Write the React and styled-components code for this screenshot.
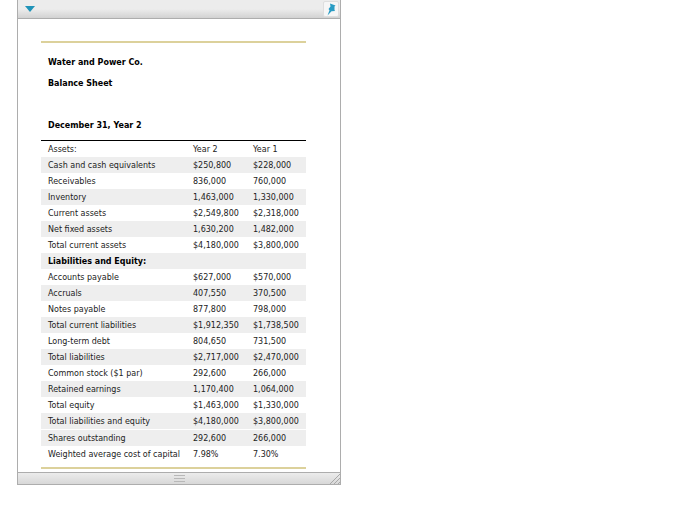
import React from "react";
import styled, { createGlobalStyle } from "styled-components";

const Global = createGlobalStyle`
  html, body { margin: 0; padding: 0; background: #fff; }
  body { font-family: "DejaVu Sans", Verdana, sans-serif; color: #000; }
`;
const Panel = styled.div`
  width: 324px;
  margin-left: 17px;
  box-sizing: border-box;
  border: 1px solid #adadad;
  border-top: 0;
  display: flex;
  flex-direction: column;
`;
const TopBar = styled.div`
  height: 18px;
  border-bottom: 1px solid #adadad;
  background: linear-gradient(#ececec 0%, #ececec 50%, #d2d2d2 100%);
  display: flex;
  align-items: center;
  justify-content: space-between;
  padding: 0 1px 0 7px;
`;
const PinButton = styled.div`
  width: 16px;
  height: 16px;
  background: #f6f6f6;
  border: 1px solid #dedede;
  box-sizing: border-box;
  border-radius: 2px;
  display: flex;
  align-items: center;
  justify-content: center;
`;
const Content = styled.div`
  padding: 22px 34px 3px 23px;
  box-sizing: border-box;
`;
const GoldRule = styled.div`
  height: 2px;
  background: #dcd19b;
`;
const Heading = styled.div`
  font-size: 8px;
  font-weight: 700;
  line-height: 11px;
  padding-left: 7px;
  margin-top: ${(p) => p.$top}px;
`;
const Table = styled.div`
  margin-top: 9px;
  border-top: 1px solid #000;
  margin-bottom: 5px;
`;
const Row = styled.div`
  display: grid;
  grid-template-columns: 145px 60px 60px;
  box-sizing: border-box;
  height: ${(p) => (p.$spaced ? 17 : 16)}px;
  border-top: ${(p) => (p.$spaced ? "1px solid #fff" : "0")};
  align-items: center;
  background: ${(p) => (p.$shade ? "#eeeeee" : "transparent")};
  background-clip: padding-box;
  font-size: 8px;
  color: #222;
`;
const Cell = styled.div`
  padding-left: 7px;
  white-space: nowrap;
  font-weight: ${(p) => (p.$bold ? 700 : 400)};
  color: ${(p) => (p.$bold ? "#000" : "inherit")};
`;
const BottomBar = styled.div`
  height: 11px;
  border-top: 1px solid #adadad;
  background: linear-gradient(#ececec, #d8d8d8);
  position: relative;
  display: flex;
  align-items: center;
  justify-content: center;
`;
const Grip = styled.div`
  width: 11px;
  height: 5px;
  border-top: 1px solid #b8b8b8;
  border-bottom: 1px solid #b8b8b8;
  position: relative;
  &::after {
    content: "";
    position: absolute;
    left: 0;
    right: 0;
    top: 2px;
    height: 1px;
    background: #b8b8b8;
  }
`;
const Resize = styled.svg`
  position: absolute;
  right: 0;
  bottom: 0;
`;

const rows = [
  ["Assets:", "Year 2", "Year 1"],
  ["Cash and cash equivalents", "$250,800", "$228,000"],
  ["Receivables", "836,000", "760,000"],
  ["Inventory", "1,463,000", "1,330,000"],
  ["Current assets", "$2,549,800", "$2,318,000"],
  ["Net fixed assets", "1,630,200", "1,482,000"],
  ["Total current assets", "$4,180,000", "$3,800,000"],
  ["Liabilities and Equity:", "", ""],
  ["Accounts payable", "$627,000", "$570,000"],
  ["Accruals", "407,550", "370,500"],
  ["Notes payable", "877,800", "798,000"],
  ["Total current liabilities", "$1,912,350", "$1,738,500"],
  ["Long-term debt", "804,650", "731,500"],
  ["Total liabilities", "$2,717,000", "$2,470,000"],
  ["Common stock ($1 par)", "292,600", "266,000"],
  ["Retained earnings", "1,170,400", "1,064,000"],
  ["Total equity", "$1,463,000", "$1,330,000"],
  ["Total liabilities and equity", "$4,180,000", "$3,800,000"],
  ["Shares outstanding", "292,600", "266,000"],
  ["Weighted average cost of capital", "7.98%", "7.30%"],
];

export default function App() {
  return (
    <>
      <Global />
      <Panel>
        <TopBar>
          <svg width="10" height="6" viewBox="0 0 10 6">
            <path d="M0 0H10L5 6Z" fill="#1f93b8" />
          </svg>
          <PinButton>
            <svg width="10" height="13" viewBox="0 0 10 13">
              <path d="M4 0.5L9.5 2.5L8.5 3.5L8.5 7L9 8L5.5 8.3L1.5 12.5L3.5 7.3L2.5 6L4.5 3.5Z" fill="#2a9cc4" />
            </svg>
          </PinButton>
        </TopBar>
        <Content>
          <GoldRule />
          <Heading $top={14}>Water and Power Co.</Heading>
          <Heading $top={10}>Balance Sheet</Heading>
          <Heading $top={31}>December 31, Year 2</Heading>
          <Table>
            {rows.map((r, i) => (
              <Row
                key={r[0]}
                $shade={i === 18 || (i < 18 && i % 2 === 1)}
                $spaced={i === 18}
              >
                <Cell $bold={i === 7}>{r[0]}</Cell>
                <Cell>{r[1]}</Cell>
                <Cell>{r[2]}</Cell>
              </Row>
            ))}
          </Table>
          <GoldRule />
        </Content>
        <BottomBar>
          <Grip />
          <Resize width="11" height="11" viewBox="0 0 11 11">
            <path d="M1 11L11 1M5 11L11 5M9 11L11 9" stroke="#a8a8a8" strokeWidth="1" />
          </Resize>
        </BottomBar>
      </Panel>
    </>
  );
}
